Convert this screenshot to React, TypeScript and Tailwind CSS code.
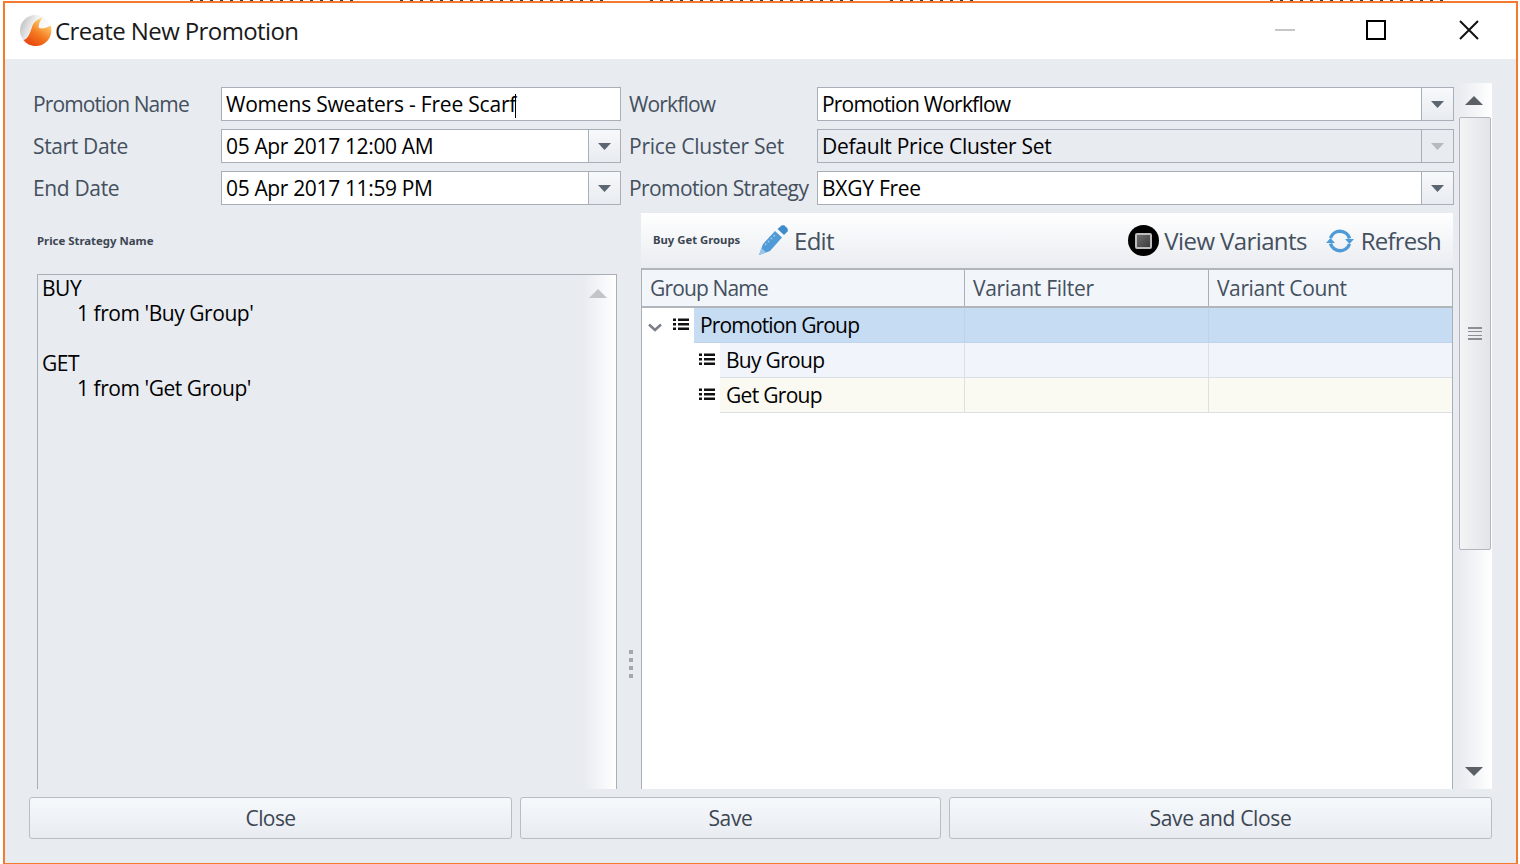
import React from "react";

const font = { fontFamily: '"Open Sans","Noto Sans",sans-serif' };

function Caret({ color = "#5b6672" }: { color?: string }) {
  return (
    <svg width="13" height="7" viewBox="0 0 13 7">
      <path d="M0 0h13L6.5 7z" fill={color} />
    </svg>
  );
}

function Field({ value, caret, combo, disabled, track }: { value: string; caret?: boolean; combo?: boolean; disabled?: boolean; track: string }) {
  return (
    <div className={`flex h-[34px] border border-[#a9afb8] ${disabled ? "bg-[#e8ebf0]" : "bg-white"}`}>
      <div className={`flex-1 pl-[4px] text-[21px] leading-[32px] text-black whitespace-nowrap overflow-hidden ${track}`}>
        {value}
        {caret && <span className="inline-block w-[1px] h-[24px] bg-black align-middle -ml-[1px]" />}
      </div>
      {combo && (
        <div className={`w-[32px] border-l border-[#a9afb8] flex items-center justify-center ${disabled ? "bg-[#e8ebf0]" : "bg-gradient-to-b from-[#f7f9fb] to-[#e8ebf0]"}`}>
          <Caret color={disabled ? "#b5bac1" : "#5b6672"} />
        </div>
      )}
    </div>
  );
}

function Label({ children, track }: { children: React.ReactNode; track: string }) {
  return <div className={`text-[21px] leading-[34px] text-[#44505e] whitespace-nowrap ${track}`}>{children}</div>;
}

function ListIcon() {
  return (
    <svg width="16" height="13" viewBox="0 0 16 13" className="shrink-0">
      <path d="M0 .5h3v2.500H0zM5 .5h11v2.500H5zM0 5h3v2.500H0zM5 5h11v2.500H5zM0 9.500h3V12H0zM5 9.500h11V12H5z" fill="#111" />
    </svg>
  );
}

function TreeRow({ label, bg, indent, chevron, border, track }: { label: string; bg: string; indent: string; chevron?: boolean; border: string; track: string }) {
  return (
    <div className="flex h-[35px]">
      <div className={`${indent} shrink-0 flex items-center justify-end pr-[5px] pb-[2px] relative`}>
        {chevron && (
          <svg width="14" height="9" viewBox="0 0 14 9" className="absolute left-[6px] top-[15px]">
            <path d="M1 1.500 7 7l6-5.500" fill="none" stroke="#7b8088" strokeWidth="2.500" />
          </svg>
        )}
        <ListIcon />
      </div>
      <div className={`flex-1 flex ${bg} border-b ${border}`}>
        <div className={`flex-1 pl-[6px] text-[21px] leading-[34px] text-black border-r ${border} ${track}`}>{label}</div>
        <div className={`w-[244px] border-r ${border}`} />
        <div className="w-[243px]" />
      </div>
    </div>
  );
}

function Logo() {
  return (
    <svg width="32" height="34" viewBox="0 0 32 34" className="shrink-0 ml-[1px]">
      <defs>
        <linearGradient id="sph" x1="0" y1="0" x2="1" y2="0.4">
          <stop offset="0" stopColor="#b4b4b4" />
          <stop offset="0.5" stopColor="#f2f2f2" />
          <stop offset="1" stopColor="#ffffff" />
        </linearGradient>
        <linearGradient id="org" x1="0.8" y1="0.2" x2="0.3" y2="1">
          <stop offset="0" stopColor="#fdc766" />
          <stop offset="0.5" stopColor="#f47a20" />
          <stop offset="1" stopColor="#e8450f" />
        </linearGradient>
      </defs>
      <circle cx="15.500" cy="16.500" r="15.500" fill="url(#sph)" />
      <path d="M3.500 26C8 25 10 19 12 13 13.500 8 17 5.500 22 4 19.500 8 18 12 19 14 22 15 26 14 30.500 11.500A15.500 15.500 0 0 1 14 32C10 31.500 6 29.500 3.500 26Z" fill="url(#org)" />
    </svg>
  );
}

function Btn({ label, cls, track }: { label: string; cls: string; track: string }) {
  return (
    <div className={`${cls} h-[42px] pt-[1px] rounded-[3px] border border-[#b9bdc4] bg-gradient-to-b from-[#f6f9fc] to-[#e8ebf0] flex items-center justify-center text-[21px] text-[#3c4652] ${track}`}>
      {label}
    </div>
  );
}

const dash = "h-[1px] bg-[repeating-linear-gradient(90deg,#3a3a3a_0_3px,transparent_3px_10px)]";

export default function App() {
  return (
    <div className="w-[1520px] h-[864px] bg-white pl-[3px] pr-[2px] overflow-hidden" style={font}>
      <div className="h-[1px] flex">
        <div className="w-[187px]" />
        <div className={`w-[170px] ${dash}`} />
        <div className="w-[40px]" />
        <div className={`w-[210px] ${dash}`} />
        <div className="w-[40px]" />
        <div className={`w-[210px] ${dash}`} />
        <div className="w-[30px]" />
        <div className={`w-[85px] ${dash}`} />
        <div className="w-[295px]" />
        <div className={`w-[180px] ${dash}`} />
      </div>
      <div className="h-[863px] border-t-[2px] border-x-[2px] border-b border-[#f47a2f] bg-[#e8ebf0] flex flex-col">
        {/* title bar */}
        <div className="h-[56px] bg-white flex items-center shrink-0 pl-[14px]">
          <Logo />
          <div className="ml-[3px] text-[24px] text-[#1a1a1a] tracking-[-0.6px] flex-1">Create New Promotion</div>
          <div className="w-[20px] h-[2px] bg-[#c6c6c6] mr-[71px] mb-[2px]" />
          <div className="w-[20px] h-[20px] border-[2px] border-black mr-[73px] mb-[2px]" />
          <svg width="20" height="20" viewBox="0 0 20 20" className="mr-[37px] mb-[2px]">
            <path d="M1 1l18 18M19 1 1 19" stroke="#111" strokeWidth="2" />
          </svg>
        </div>

        {/* body */}
        <div className="flex-1 flex flex-col pl-[24px] pr-[24px] pt-[24px] min-h-0">
          <div className="h-[706px] flex shrink-0">
            <div className="w-[1425px] pl-[4px] pt-[4px] flex flex-col">
              {/* form */}
              <div className="grid grid-cols-[188px_400px_196px_637px] gap-y-[8px] h-[118px] shrink-0">
                <Label track="tracking-[-0.9px]">Promotion Name</Label>
                <Field value="Womens Sweaters - Free Scarf" caret track="tracking-[-0.2px]" />
                <div className="pl-[8px]"><Label track="tracking-[-0.85px]">Workflow</Label></div>
                <Field value="Promotion Workflow" combo track="tracking-[-0.8px]" />
                <Label track="tracking-[-0.35px]">Start Date</Label>
                <Field value="05 Apr 2017 12:00 AM" combo track="tracking-[-0.35px]" />
                <div className="pl-[8px]"><Label track="tracking-[-0.25px]">Price Cluster Set</Label></div>
                <Field value="Default Price Cluster Set" combo disabled track="tracking-[-0.27px]" />
                <Label track="tracking-[-0.35px]">End Date</Label>
                <Field value="05 Apr 2017 11:59 PM" combo track="tracking-[-0.35px]" />
                <div className="pl-[8px]"><Label track="tracking-[-0.6px]">Promotion Strategy</Label></div>
                <Field value="BXGY Free" combo track="tracking-[-0.25px]" />
              </div>

              {/* panels */}
              <div className="flex-1 flex min-h-0 pl-[4px]">
                <div className="w-[580px] flex flex-col shrink-0">
                  <div className="h-[69px] pt-[28px] text-[11.4px] leading-[16px] font-bold text-[#3c4652]" style={{ fontFamily: '"Noto Sans",sans-serif' }}>Price Strategy Name</div>
                  <div className="flex-1 border-x border-t border-[#a9afb8] flex min-h-0">
                    <div className="flex-1 pl-[4px] pt-[1px] text-[21px] leading-[25px] text-black tracking-[-0.45px]">
                      <div>BUY</div>
                      <div className="pl-[35px]">1 from 'Buy Group'</div>
                      <div className="h-[25px]" />
                      <div>GET</div>
                      <div className="pl-[35px]">1 from 'Get Group'</div>
                    </div>
                    <div className="w-[33px] bg-gradient-to-r from-[#e8ebf0] to-white flex justify-center pt-[14px] pr-[4px]">
                      <svg width="18" height="9" viewBox="0 0 18 9"><path d="M9 0l9 9H0z" fill="#c2c4c8" /></svg>
                    </div>
                  </div>
                </div>

                <div className="w-[24px] shrink-0 flex flex-col items-center justify-end pb-[111px] gap-[4px] pl-[4px]">
                  {[0, 1, 2, 3].map((i) => (
                    <div key={i} className="w-[4px] h-[4px] bg-[#a4a9b0]" />
                  ))}
                </div>

                <div className="w-[812px] shrink-0 pt-[8px] flex flex-col">
                  <div className="h-[55px] shrink-0 bg-gradient-to-b from-white to-[#e9ecf1] flex items-center pl-[12px] pr-[12px]">
                    <span className="text-[11.3px] font-bold text-[#3c4652] w-[105px] whitespace-nowrap" style={{ fontFamily: '"Noto Sans",sans-serif' }}>Buy Get Groups</span>
                    <svg width="32" height="32" viewBox="0 0 32 32" className="shrink-0">
                      <path d="M1 30l4-11L17 6l7 6.500L12 26z" fill="#4f9bd8" />
                      <path d="M1 30l2.500-7 4.500 4.500z" fill="#9cc6e8" />
                      <path d="M7 20l11-11" stroke="#9cc6e8" strokeWidth="1.500" strokeDasharray="2 2" />
                      <path d="M19.500 4l4-3.500c1-.5 2-.5 3 0l3 3c.5 1 .5 2 0 3L26 10z" fill="#3f8ccb" />
                    </svg>
                    <span className="ml-[4px] text-[24px] text-[#44505e] tracking-[-0.7px]">Edit</span>
                    <div className="flex-1" />
                    <div className="w-[31px] h-[31px] rounded-full bg-black flex items-center justify-center blur-[0.4px]">
                      <div className="w-[17px] h-[16px] rounded-[2px] bg-gradient-to-br from-[#6e6e6e] to-[#3e3e3e] border-2 border-[#bdbdbd]" />
                    </div>
                    <span className="ml-[5px] text-[24px] text-[#44505e] tracking-[-0.6px]">View Variants</span>
                    <svg width="30" height="30" viewBox="0 0 30 30" className="ml-[18px] shrink-0">
                      <path d="M5.500 12A10 10 0 0 1 24.500 12.500" fill="none" stroke="#4f9bd8" strokeWidth="3.500" />
                      <path d="M24.500 18A10 10 0 0 1 5.500 17.500" fill="none" stroke="#4f9bd8" strokeWidth="3.500" />
                      <path d="M20 13h9l-4.500 5zM1 17h9l-4.500-5z" fill="#4f9bd8" />
                    </svg>
                    <span className="ml-[6px] text-[24px] text-[#44505e] tracking-[-0.8px]">Refresh</span>
                  </div>
                  <div className="flex-1 bg-white border-l border-r border-[#a9afb8] flex flex-col min-h-0">
                    <div className="h-[40px] shrink-0 flex border-y-2 border-y-[#b1b5bc] bg-[#f2f5fa] text-[21px] leading-[36px] text-[#44505e]">
                      <div className="flex-1 pl-[8px] border-r border-[#a9afb8] tracking-[-0.85px]">Group Name</div>
                      <div className="w-[244px] pl-[8px] border-r border-[#a9afb8] tracking-[-0.3px]">Variant Filter</div>
                      <div className="w-[243px] pl-[8px] tracking-[-0.4px]">Variant Count</div>
                    </div>
                    <TreeRow label="Promotion Group" bg="bg-[#c6dcf3]" indent="w-[52px]" chevron border="border-[#c0d4e9]" track="tracking-[-0.85px]" />
                    <TreeRow label="Buy Group" bg="bg-[#f1f4fa]" indent="w-[78px]" border="border-[#dcdfe4]" track="tracking-[-0.7px]" />
                    <TreeRow label="Get Group" bg="bg-[#fafaf2]" indent="w-[78px]" border="border-[#dcdfe4]" track="tracking-[-0.7px]" />
                  </div>
                </div>
              </div>
            </div>

            {/* scrollbar */}
            <div className="w-[33px] ml-[5px] shrink-0 bg-gradient-to-r from-[#e8ebf0] to-white flex flex-col">
              <div className="h-[34px] flex items-center justify-center shrink-0 pr-[3px]">
                <svg width="18" height="9" viewBox="0 0 18 9"><path d="M9 0l9 9H0z" fill="#5c6066" /></svg>
              </div>
              <div className="h-[433px] shrink-0 rounded-[2px] border border-[#b2b6bc] bg-gradient-to-r from-[#f3f4f6] to-[#e2e4e7] flex items-center justify-center mr-[1px]">
                <div className="w-[14px] h-[13px] flex flex-col justify-between">
                  {[0, 1, 2, 3].map((i) => (
                    <div key={i} className="h-[1.500px] bg-[#8b8f95]" />
                  ))}
                </div>
              </div>
              <div className="flex-1 flex items-end justify-center pb-[13px] pr-[3px]">
                <svg width="18" height="9" viewBox="0 0 18 9"><path d="M0 0h18L9 9z" fill="#5c6066" /></svg>
              </div>
            </div>
          </div>

          {/* buttons */}
          <div className="flex gap-[8px] pt-[8px]">
            <Btn label="Close" cls="w-[483px]" track="tracking-[-0.6px]" />
            <Btn label="Save" cls="w-[421px]" track="tracking-[-0.35px]" />
            <Btn label="Save and Close" cls="flex-1" track="tracking-[-0.35px]" />
          </div>
        </div>
      </div>
    </div>
  );
}
